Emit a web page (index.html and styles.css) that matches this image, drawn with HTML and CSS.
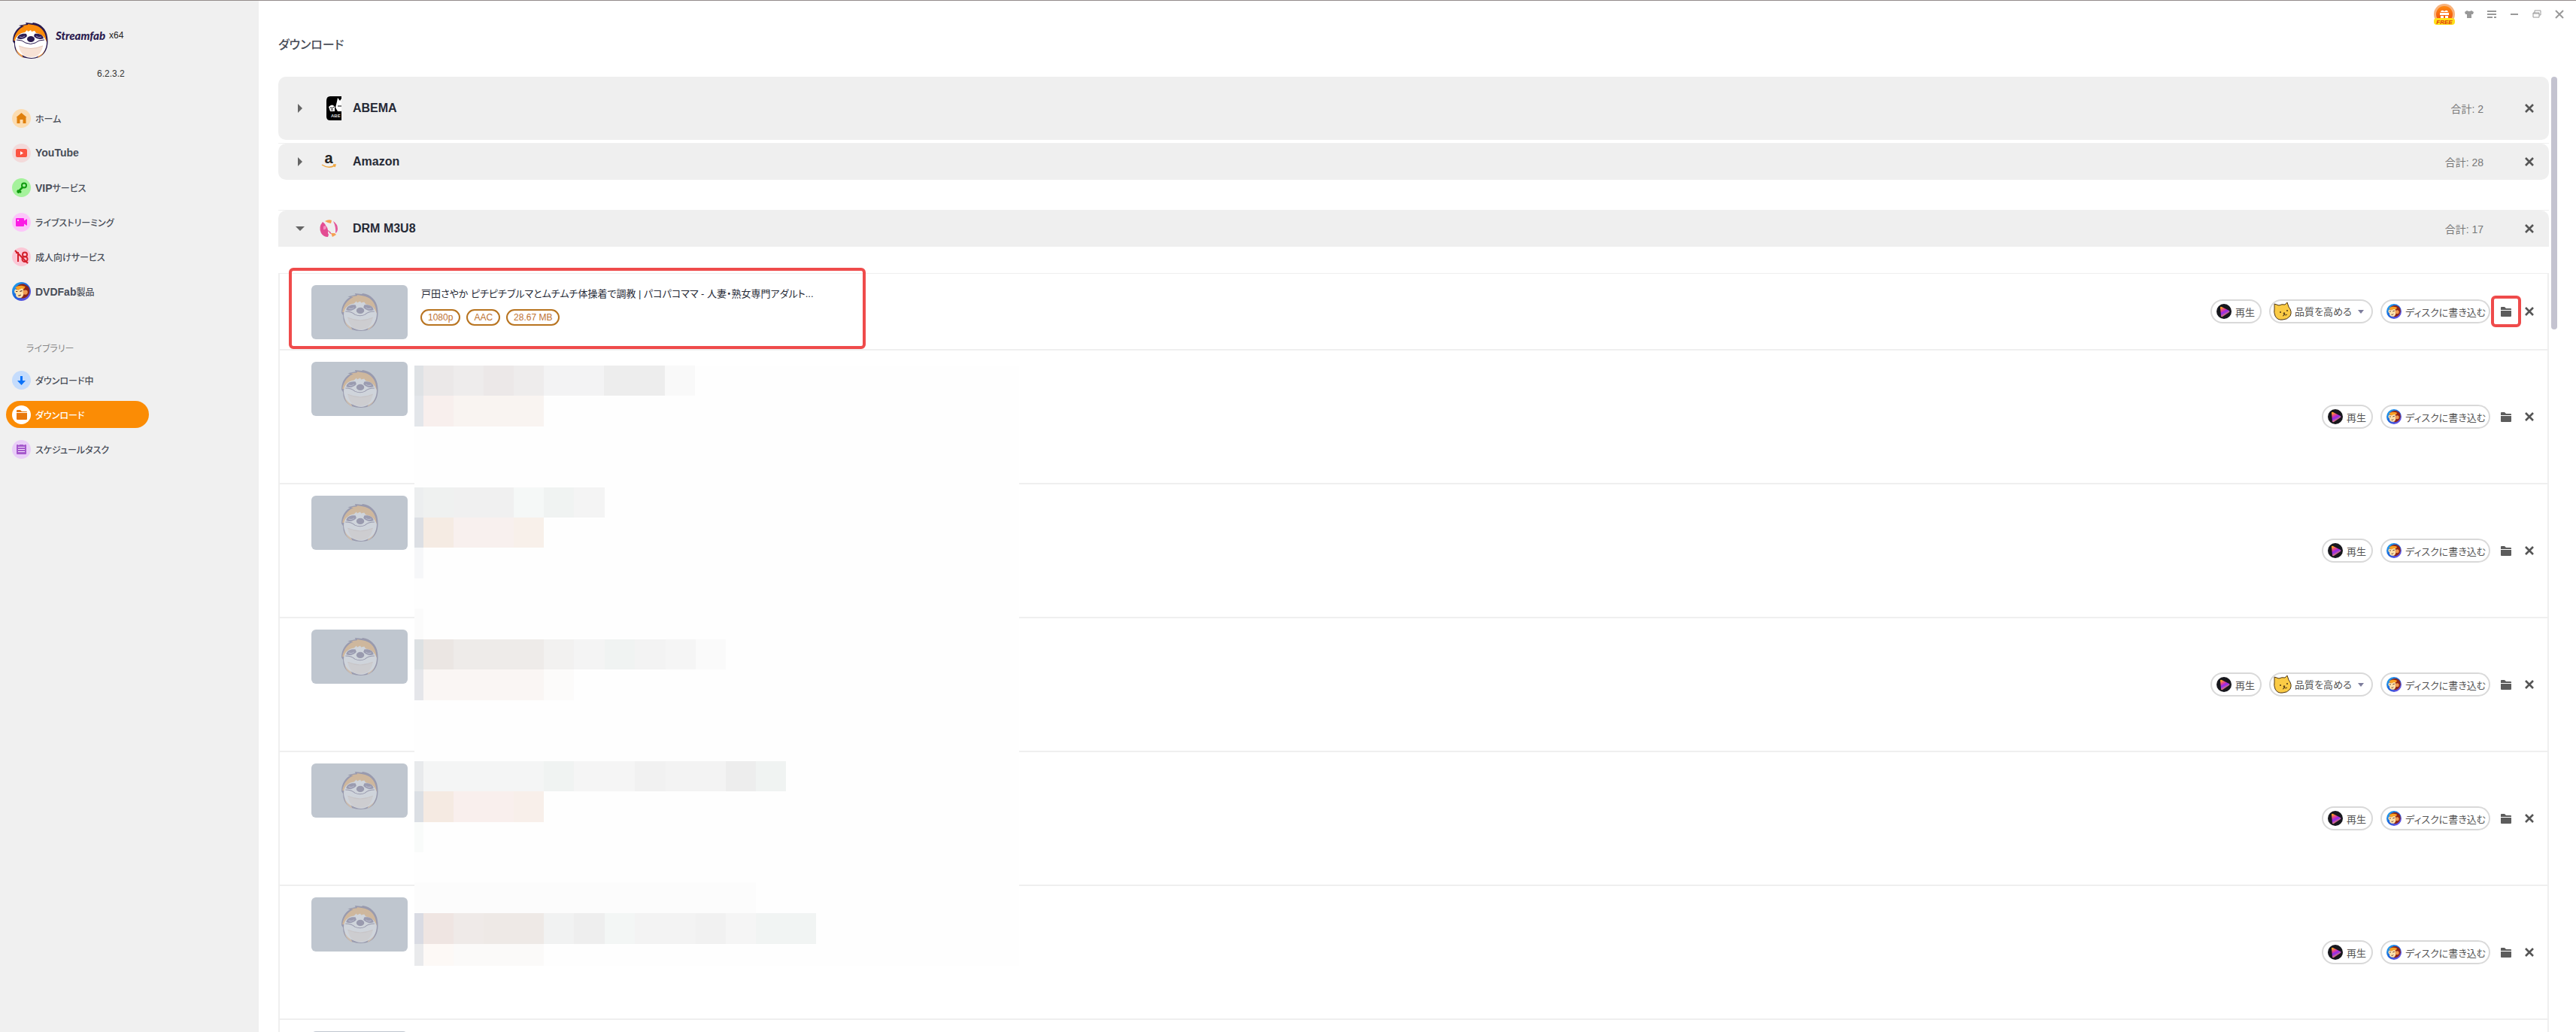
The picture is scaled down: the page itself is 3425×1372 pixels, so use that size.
FILE: index.html
```html
<!DOCTYPE html>
<html lang="ja">
<head>
    <meta charset="UTF-8">
    <title>StreamFab</title>
    <link rel="stylesheet" href="styles.css">
</head>
<body>
<!-- shared icons -->
<svg class="defs" aria-hidden="true">
    <linearGradient id="play-fill" x1="0" y1="0" x2="0.5" y2="1">
        <stop offset="0.1" stop-color="#ffa51f"/>
        <stop offset="0.4" stop-color="#e0399b"/>
        <stop offset="0.6" stop-color="#8f2bf0"/>
        <stop offset="1" stop-color="#ff9a3c"/>
    </linearGradient>
    <linearGradient id="disc-fill" x1="0" y1="0" x2="1" y2="1">
        <stop offset="0" stop-color="#22b4f5"/>
        <stop offset="0.5" stop-color="#1d5fd8"/>
        <stop offset="1" stop-color="#8a4be8"/>
    </linearGradient>
    <linearGradient id="free-fill" x1="0" y1="0" x2="0" y2="1">
        <stop offset="0" stop-color="#ff8a10"/>
        <stop offset="1" stop-color="#f0480c"/>
    </linearGradient>
    <symbol id="sloth" viewBox="0 0 48 48">
        <path d="M3 28l-2-3C1 15 6 8 12 5l-3-1 10-2-1-2 9 1 1-1c10 1 18 9 19 19 2 13-2 23-11 27-8 3-15 2-22 0C6 42 3 36 3 28z" fill="#2a1a4e"/>
        <path d="M2 24C4 14 9 8 16 5l-3-1 8-1v-1l7 1c9 1 16 8 17 17l1 6-42 2 1-4z" fill="#fb8c0c"/>
        <path d="M5 34c1 6 4 10 10 13l-3-7zM44 34c-1 6-4 10-10 13l3-7z" fill="#f0a050"/>
        <path d="M4 25C5 18 10 14 17 13l3-3 1 2 4-2 1 2 4-1 2 3c8 1 12 6 14 12 0 9-4 15-10 18-6 4-14 4-21 0C8 41 3 34 4 25z" fill="#fff"/>
        <path d="M7 21c1-5 6-7 12-6l1 3c-3 4-9 5-13 3zM42 21c-1-5-6-7-12-6l-1 3c3 4 9 5 13 3z" fill="#2f2058"/>
        <path d="M10 19q4 2 7-1M39 19q-4 2-7-1" fill="none" stroke="#a59ac0" stroke-width="1"/>
        <ellipse cx="25" cy="22" rx="5" ry="4" fill="#2a1a4e"/>
        <path d="M6 23q8 0 12 4 7 3 13 0 4-4 12-4" fill="none" stroke="#2a1a4e" stroke-width="1"/>
        <path d="M9 31q16 7 32 0-1 8-7 13-9 4-18 0-6-5-7-13z" fill="#f7e2d5"/>
        <path d="M9 31q16 7 32 0" fill="none" stroke="#e5c5b5" stroke-width="1"/>
    </symbol>
    <symbol id="monkey" viewBox="0 0 24 24">
        <circle cx="12" cy="12" r="12" fill="url(#disc-fill)"/>
        <path d="M5 7c3-5 10-6 13-3 4 1 6 8 3 12-3 5-9 6-12 3z" fill="#8c2418"/>
        <path d="M4 7c4-3 9-3 13-1l-2 3-8 1z" fill="#f8a024"/>
        <path d="M4 9l4 1 5-2c3 3 3 9-1 12-5 1-8-2-7-5-3-2-2-4-1-6z" fill="#fde2ad"/>
        <circle cx="17" cy="13" r="3" fill="#f09a50"/>
        <path d="M5 12l2 0M10 12l3-1M8 17q2 1 3-1" fill="none" stroke="#4a1710" stroke-width="1"/>
    </symbol>
    <symbol id="play" viewBox="0 0 20 20">
        <circle cx="10" cy="10" r="10" fill="#17171d"/>
        <path d="M5 5q0-2 2-1l10 5q1 1 0 2l-9 6q-2 1-2-1z" fill="url(#play-fill)"/>
    </symbol>
    <symbol id="cat" viewBox="0 0 24 24">
        <path d="M1 2l6 2q4-2 8-1l3-3 2 6q5 6 2 12-4 5-10 5-7 1-10-5-2-5-1-9z" fill="#fbcb45" stroke="#4c3517" stroke-width="1"/>
        <circle cx="9" cy="13" r="1" fill="#4c3517"/>
        <circle cx="18" cy="11" r="1" fill="#4c3517"/>
        <path d="M13 14l2 0-1 2zM12 18q2 0 2-2 2 2 4 0" fill="none" stroke="#4c3517"/>
    </symbol>
    <symbol id="folder" viewBox="0 0 14 13">
        <path d="M0 1q0-1 1-1h4l2 2h6q1 0 1 1v1H0zM0 5h14v7q0 1-1 1H1q-1 0-1-1z" fill="#5c5c5c"/>
    </symbol>
    <symbol id="close" viewBox="0 0 12 12">
        <path d="M1 1l10 10M11 1L1 11" stroke="#555" stroke-width="2.6"/>
    </symbol>
</svg>

<div class="app">
    <aside class="sidebar">
        <div class="brand">
            <svg class="logo"><use href="#sloth"/></svg>
            <span class="brand-name">Streamfab</span>
            <span class="brand-arch">x64</span>
        </div>
        <div class="version">6.2.3.2</div>
        <nav>
            <a class="nav-item" href="#">
                <svg class="nav-icon" viewBox="0 0 25 25"><circle cx="12.5" cy="12.5" r="12.5" fill="#fcdcb0"/><path d="M12.500 5l7 6h-1v8h-4v-5h-4v5h-4v-8h-1z" fill="#e0800c"/></svg>
                <span>ホーム</span>
            </a>
            <a class="nav-item" href="#">
                <svg class="nav-icon" viewBox="0 0 25 25"><circle cx="12.5" cy="12.5" r="12.5" fill="#f3dada"/><rect x="5" y="7" width="15" height="11" rx="2" fill="#fc5442"/><path d="M11 10v5l4-2.500z" fill="#fff"/></svg>
                <span><b>YouTube</b></span>
            </a>
            <a class="nav-item" href="#">
                <svg class="nav-icon" viewBox="0 0 25 25"><circle cx="12.5" cy="12.5" r="12.5" fill="#a5f29c"/><circle cx="16" cy="9.5" r="3" fill="none" stroke="#0f9a0f" stroke-width="2"/><path d="M14 12l-7 7M9 16l3 3M7 16l3 3" stroke="#0f9a0f" stroke-width="2.500"/></svg>
                <span><b>VIP</b>サービス</span>
            </a>
            <a class="nav-item" href="#">
                <svg class="nav-icon" viewBox="0 0 25 25"><circle cx="12.5" cy="12.5" r="12.5" fill="#fcc6fa"/><rect x="5" y="7" width="11" height="11" rx="1" fill="#fb1ce4"/><path d="M15 11l5-3v9l-5-3z" fill="#fb1ce4"/><circle cx="8" cy="10" r="1" fill="#fff"/></svg>
                <span>ライブストリーミング</span>
            </a>
            <a class="nav-item" href="#">
                <svg class="nav-icon" viewBox="0 0 25 25"><circle cx="12.5" cy="12.5" r="12.5" fill="#fbc8d6"/><path d="M5 7h3v12M4 4l17 17" fill="none" stroke="#d3202c" stroke-width="2"/><circle cx="17" cy="9.500" r="3" fill="none" stroke="#d3202c" stroke-width="2"/><circle cx="17" cy="15.500" r="3.500" fill="none" stroke="#d3202c" stroke-width="2"/></svg>
                <span>成人向けサービス</span>
            </a>
            <a class="nav-item" href="#">
                <svg class="nav-icon"><use href="#monkey"/></svg>
                <span><b>DVDFab</b>製品</span>
            </a>
        </nav>
        <div class="nav-title">ライブラリー</div>
        <nav>
            <a class="nav-item" href="#">
                <svg class="nav-icon" viewBox="0 0 25 25"><circle cx="12.5" cy="12.5" r="12.5" fill="#c5dcfc"/><path d="M11 7h3v6h4l-5.500 6L7 13h4z" fill="#0a72f8"/></svg>
                <span>ダウンロード中</span>
            </a>
            <a class="nav-item active" href="#">
                <svg class="nav-icon" viewBox="0 0 25 25"><circle cx="12.5" cy="12.5" r="12.5" fill="#fff"/><path d="M6 7q0-1 1-1h4l2 2h6q1 0 1 1H6zM6 10h14v8q0 1-1 1H7q-1 0-1-1z" fill="#e8780c"/></svg>
                <span>ダウンロード</span>
            </a>
            <a class="nav-item" href="#">
                <svg class="nav-icon" viewBox="0 0 25 25"><circle cx="12.5" cy="12.5" r="12.5" fill="#e9cdf8"/><rect x="6" y="6" width="13" height="13" rx="1" fill="#a558cc"/><path d="M9 5v2M16 5v2M8 9.500h9M8 12.500h9M8 15.500h9" stroke="#f2e0fb" stroke-width="1"/></svg>
                <span>スケジュールタスク</span>
            </a>
        </nav>
    </aside>

    <main class="main">
        <div class="titlebar">
            <button class="win-btn free" aria-label="無料">
                <svg width="28" height="28" viewBox="0 0 28 28"><circle cx="14" cy="14" r="14" fill="#f8b27c"/><circle cx="14" cy="14" r="11" fill="url(#free-fill)"/><path d="M8 12h12v3H8zM9 16h4v3H9zM15 16h4v3h-4zM9 11q1-4 5-1 4-3 5 1z" fill="#fff"/><rect x="0" y="19" width="28" height="9" rx="4" fill="#ffe018"/><text class="free-text" x="14" y="27" text-anchor="middle">FREE</text></svg>
            </button>
            <button class="win-btn" aria-label="スキン"><svg width="12" height="12" viewBox="0 0 12 12"><path d="M3 1q3 2 6 0l3 2-1 3H9v5H3V6H1L0 3z" fill="#999"/></svg></button>
            <button class="win-btn" aria-label="メニュー"><svg width="12" height="12" viewBox="0 0 12 12"><path d="M0 2h12M0 6h12M0 10h7M9 10h3" stroke="#999" stroke-width="2"/></svg></button>
            <button class="win-btn" aria-label="最小化"><svg width="12" height="12" viewBox="0 0 12 12"><path d="M1 6h10" stroke="#999" stroke-width="2"/></svg></button>
            <button class="win-btn" aria-label="元に戻す"><svg width="12" height="12" viewBox="0 0 12 12"><path d="M1 4h8v6H1zM3 4V1h8v6H9M1 5h8" fill="none" stroke="#999" stroke-width="1"/></svg></button>
            <button class="win-btn" aria-label="閉じる"><svg width="12" height="12" viewBox="0 0 12 12"><path d="M1 1l10 10M11 1L1 11" stroke="#999" stroke-width="2"/></svg></button>
        </div>
        <h1>ダウンロード</h1>
        <div class="scroll-area">
            <div class="groups">
                <section class="group group-tall">
                    <div class="group-head">
                        <button class="toggle" aria-label="ABEMAを開く"><svg width="12" height="12" viewBox="0 0 12 12"><path d="M3 0v12l6-6z" fill="#666"/></svg></button>
                        <svg class="site-icon" viewBox="0 0 32 32"><path d="M12 6q0-6 5-6h15v32H17q-5 0-5-5z" fill="#000"/><path d="M32 3v17h-5l-3-5 2-8 1-5 3 4zM15 14q5-5 8 0v6h-6z" fill="#fff"/><path d="M17 15l3 1 2-2M18 18h3M27 13h5" stroke="#000" fill="none"/><text class="abema-text" x="18" y="28">ABE</text></svg>
                        <h2>ABEMA</h2>
                        <span class="total">合計: 2</span>
                        <button class="icon-btn" aria-label="削除"><svg width="12" height="12"><use href="#close"/></svg></button>
                    </div>
                </section>
                <section class="group group-amazon">
                    <div class="group-head">
                        <button class="toggle" aria-label="Amazonを開く"><svg width="12" height="12" viewBox="0 0 12 12"><path d="M3 0v12l6-6z" fill="#666"/></svg></button>
                        <svg class="site-icon" viewBox="0 0 32 32"><text class="amazon-text" x="15" y="18" text-anchor="middle">a</text><path d="M6 20q9 6 17 1M21 20l3 0-1 3" fill="none" stroke="#f0a63c" stroke-width="1.500"/></svg>
                        <h2>Amazon</h2>
                        <span class="total">合計: 28</span>
                        <button class="icon-btn" aria-label="削除"><svg width="12" height="12"><use href="#close"/></svg></button>
                    </div>
                </section>
                <section class="group open">
                    <div class="group-head">
                        <button class="toggle" aria-label="DRM M3U8を閉じる"><svg width="12" height="12" viewBox="0 0 12 12"><path d="M0 3h12L6 9z" fill="#666"/></svg></button>
                        <svg class="site-icon" viewBox="0 0 32 32"><path d="M7 7Q1 14 5 22q3 5 9 5l1-3q-2-3 0-5 1 4 4 4-2-4-5-5-1-5-3-6 0-2-4-5z" fill="#e34c92"/><path d="M8 13q3-2 4 1-1 4-4 3z" fill="#f48ec0"/><path d="M21 6q6 4 6 10 0 4-3 6 1-8-3-16z" fill="#e35a9c"/><path d="M10 6q5-3 9-1l-1 4-4-1zM18 22l5 0 2 2-5 3z" fill="#f5a152"/></svg>
                        <h2>DRM M3U8</h2>
                        <span class="total">合計: 17</span>
                        <button class="icon-btn" aria-label="削除"><svg width="12" height="12"><use href="#close"/></svg></button>
                    </div>
                    <div class="items">
                        <article class="item item-first">
                            <div class="thumb"><svg><use href="#sloth"/></svg></div>
                            <div class="info">
                                <h3>戸田さやか ピチピチブルマとムチムチ体操着で調教 | パコパコママ - 人妻・熟女専門アダルト...</h3>
                                <div class="tags"><span>1080p</span><span>AAC</span><span>28.67 MB</span></div>
                            </div>
                            <div class="actions">
                                <button class="pill"><svg><use href="#play"/></svg>再生</button>
                                <label class="pill pill-select"><svg class="cat"><use href="#cat"/></svg><select aria-label="品質"><option>品質を高める</option></select><svg class="caret" viewBox="0 0 8 5"><path d="M0 0h8L4 5z" fill="#7d7d9c"/></svg></label>
                                <button class="pill"><svg><use href="#monkey"/></svg>ディスクに書き込む</button>
                                <button class="folder-btn marked" aria-label="フォルダを開く"><svg width="14" height="13"><use href="#folder"/></svg></button>
                                <button class="icon-btn" aria-label="削除"><svg width="12" height="12"><use href="#close"/></svg></button>
                            </div>
                            <div class="mark"></div>
                        </article>
                        <article class="item">
                            <div class="thumb"><svg><use href="#sloth"/></svg></div>
                            <div class="actions">
                                <button class="pill"><svg><use href="#play"/></svg>再生</button>
                                <button class="pill"><svg><use href="#monkey"/></svg>ディスクに書き込む</button>
                                <button class="folder-btn" aria-label="フォルダを開く"><svg width="14" height="13"><use href="#folder"/></svg></button>
                                <button class="icon-btn" aria-label="削除"><svg width="12" height="12"><use href="#close"/></svg></button>
                            </div>
                        </article>
                        <article class="item">
                            <div class="thumb"><svg><use href="#sloth"/></svg></div>
                            <div class="actions">
                                <button class="pill"><svg><use href="#play"/></svg>再生</button>
                                <button class="pill"><svg><use href="#monkey"/></svg>ディスクに書き込む</button>
                                <button class="folder-btn" aria-label="フォルダを開く"><svg width="14" height="13"><use href="#folder"/></svg></button>
                                <button class="icon-btn" aria-label="削除"><svg width="12" height="12"><use href="#close"/></svg></button>
                            </div>
                        </article>
                        <article class="item">
                            <div class="thumb"><svg><use href="#sloth"/></svg></div>
                            <div class="actions">
                                <button class="pill"><svg><use href="#play"/></svg>再生</button>
                                <label class="pill pill-select"><svg class="cat"><use href="#cat"/></svg><select aria-label="品質"><option>品質を高める</option></select><svg class="caret" viewBox="0 0 8 5"><path d="M0 0h8L4 5z" fill="#7d7d9c"/></svg></label>
                                <button class="pill"><svg><use href="#monkey"/></svg>ディスクに書き込む</button>
                                <button class="folder-btn" aria-label="フォルダを開く"><svg width="14" height="13"><use href="#folder"/></svg></button>
                                <button class="icon-btn" aria-label="削除"><svg width="12" height="12"><use href="#close"/></svg></button>
                            </div>
                        </article>
                        <article class="item">
                            <div class="thumb"><svg><use href="#sloth"/></svg></div>
                            <div class="actions">
                                <button class="pill"><svg><use href="#play"/></svg>再生</button>
                                <button class="pill"><svg><use href="#monkey"/></svg>ディスクに書き込む</button>
                                <button class="folder-btn" aria-label="フォルダを開く"><svg width="14" height="13"><use href="#folder"/></svg></button>
                                <button class="icon-btn" aria-label="削除"><svg width="12" height="12"><use href="#close"/></svg></button>
                            </div>
                        </article>
                        <article class="item">
                            <div class="thumb"><svg><use href="#sloth"/></svg></div>
                            <div class="actions">
                                <button class="pill"><svg><use href="#play"/></svg>再生</button>
                                <button class="pill"><svg><use href="#monkey"/></svg>ディスクに書き込む</button>
                                <button class="folder-btn" aria-label="フォルダを開く"><svg width="14" height="13"><use href="#folder"/></svg></button>
                                <button class="icon-btn" aria-label="削除"><svg width="12" height="12"><use href="#close"/></svg></button>
                            </div>
                        </article>
                        <article class="item">
                            <div class="thumb"><svg><use href="#sloth"/></svg></div>
                        </article>
                        <!-- pixelated cover over the titles -->
                        <svg class="mosaic" viewBox="0 0 804 798">
                            <rect width="804" height="798" fill="#fefefe"/>
                            <!-- item 2 -->
                            <rect x="0" y="0" width="12" height="40" fill="#dfe2e5"/>
                            <rect x="12" y="0" width="40" height="40" fill="#ebe8e8"/>
                            <rect x="52" y="0" width="40" height="40" fill="#eeecec"/>
                            <rect x="92" y="0" width="40" height="40" fill="#ece8e8"/>
                            <rect x="132" y="0" width="40" height="40" fill="#eeecec"/>
                            <rect x="172" y="0" width="80" height="40" fill="#f3f3f4"/>
                            <rect x="252" y="0" width="81" height="40" fill="#ededed"/>
                            <rect x="333" y="0" width="40" height="40" fill="#f9f9f9"/>
                            <rect x="0" y="40" width="12" height="41" fill="#e3e6ea"/>
                            <rect x="12" y="40" width="40" height="41" fill="#f8efed"/>
                            <rect x="52" y="40" width="120" height="41" fill="#f9f4f1"/>
                            <!-- item 3 -->
                            <rect x="0" y="162" width="12" height="40" fill="#eceeef"/>
                            <rect x="12" y="162" width="40" height="40" fill="#eff1f0"/>
                            <rect x="52" y="162" width="80" height="40" fill="#f0f0f0"/>
                            <rect x="132" y="162" width="40" height="40" fill="#f5f8f7"/>
                            <rect x="172" y="162" width="40" height="40" fill="#f0f3f2"/>
                            <rect x="212" y="162" width="41" height="40" fill="#f4f4f4"/>
                            <rect x="0" y="202" width="12" height="40" fill="#dcdfe4"/>
                            <rect x="12" y="202" width="40" height="40" fill="#f5ebe3"/>
                            <rect x="52" y="202" width="80" height="40" fill="#f8f0ee"/>
                            <rect x="132" y="202" width="40" height="40" fill="#f8f0ea"/>
                            <rect x="0" y="242" width="12" height="41" fill="#f6f7f9"/>
                            <!-- item 4 -->
                            <rect x="0" y="323" width="12" height="41" fill="#fbfbfb"/>
                            <rect x="0" y="364" width="12" height="40" fill="#dde1e3"/>
                            <rect x="12" y="364" width="40" height="40" fill="#ebe6e3"/>
                            <rect x="52" y="364" width="120" height="40" fill="#eeebe9"/>
                            <rect x="172" y="364" width="40" height="40" fill="#f2f1f0"/>
                            <rect x="212" y="364" width="41" height="40" fill="#f4f4f4"/>
                            <rect x="253" y="364" width="40" height="40" fill="#f0f3f2"/>
                            <rect x="293" y="364" width="41" height="40" fill="#f3f3f3"/>
                            <rect x="334" y="364" width="40" height="40" fill="#f5f5f5"/>
                            <rect x="374" y="364" width="40" height="40" fill="#fafafa"/>
                            <rect x="0" y="404" width="12" height="41" fill="#e5e6ea"/>
                            <rect x="12" y="404" width="160" height="41" fill="#faf6f4"/>
                            <rect x="172" y="404" width="40" height="41" fill="#fcfbfa"/>
                            <!-- item 5 -->
                            <rect x="0" y="526" width="12" height="40" fill="#e8eaec"/>
                            <rect x="12" y="526" width="160" height="40" fill="#f4f5f5"/>
                            <rect x="172" y="526" width="40" height="40" fill="#f0f3f2"/>
                            <rect x="212" y="526" width="81" height="40" fill="#f5f5f5"/>
                            <rect x="293" y="526" width="41" height="40" fill="#f1f1f1"/>
                            <rect x="334" y="526" width="80" height="40" fill="#f3f3f3"/>
                            <rect x="414" y="526" width="40" height="40" fill="#ededed"/>
                            <rect x="454" y="526" width="40" height="40" fill="#f0f3f2"/>
                            <rect x="0" y="566" width="12" height="41" fill="#dbdfe4"/>
                            <rect x="12" y="566" width="40" height="41" fill="#f5eae2"/>
                            <rect x="52" y="566" width="80" height="41" fill="#f9efed"/>
                            <rect x="132" y="566" width="40" height="41" fill="#f8efea"/>
                            <rect x="0" y="607" width="12" height="40" fill="#f9fbfa"/>
                            <!-- item 6 -->
                            <rect x="0" y="687" width="454" height="41" fill="#fcfcfc"/>
                            <rect x="0" y="728" width="12" height="41" fill="#d9dbe3"/>
                            <rect x="12" y="728" width="40" height="41" fill="#efe5e2"/>
                            <rect x="52" y="728" width="40" height="41" fill="#efeae8"/>
                            <rect x="92" y="728" width="80" height="41" fill="#eee9e6"/>
                            <rect x="172" y="728" width="40" height="41" fill="#f1f2f2"/>
                            <rect x="212" y="728" width="41" height="41" fill="#eeeeee"/>
                            <rect x="253" y="728" width="40" height="41" fill="#f3f6f5"/>
                            <rect x="293" y="728" width="81" height="41" fill="#f3f3f3"/>
                            <rect x="374" y="728" width="40" height="41" fill="#f1f1f1"/>
                            <rect x="414" y="728" width="40" height="41" fill="#f5f5f5"/>
                            <rect x="454" y="728" width="80" height="41" fill="#f1f4f3"/>
                            <rect x="0" y="769" width="12" height="29" fill="#e9eaec"/>
                            <rect x="12" y="769" width="40" height="29" fill="#fdf9f6"/>
                            <rect x="52" y="769" width="120" height="29" fill="#fbfaf9"/>
                        </svg>
                    </div>
                </section>
            </div>
            <div class="scrollbar"></div>
        </div>
    </main>
</div>
</body>
</html>
```
FILE: styles.css
```css
*{
    box-sizing: border-box;
}
body{
    margin: 0;
    background-color: white;
    color: #484d58;
    font-family: "Liberation Sans", "Noto Sans CJK JP", sans-serif;
    font-size: 13px;
    font-feature-settings: "palt";
}
button,select{
    margin: 0;
    padding: 0;
    border: 0;
    background: none;
    color: inherit;
    font: inherit;
    font-feature-settings: inherit;
}
svg{
    display: block;
    flex-shrink: 0;
}
.defs{
    position: absolute;
    width: 0;
    height: 0;
}
.app{
    display: flex;
    height: 100vh;
    overflow: hidden;
    border-top: 1px solid #938b8a;
}

/* sidebar */
.sidebar{
    width: 344px;
    flex-shrink: 0;
    padding-top: 29px;
    background-color: #f0f0f0;
}
.brand{
    display: flex;
    align-items: flex-start;
    height: 50px;
    padding-left: 16px;
    line-height: 34px;
    color: #222;
}
.logo{
    width: 48px;
    height: 48px;
    margin-right: 10px;
}
.brand-name{
    margin-right: 5px;
    font-family: Lato, sans-serif;
    font-size: 15px;
    font-weight: 900;
    font-style: italic;
    color: #2a1a4e;
}
.brand-arch{
    font-size: 12px;
}
.version{
    padding: 8px 0 31px 129px;
    line-height: 20px;
    font-size: 12px;
    color: #333;
}
.nav-item{
    display: flex;
    align-items: center;
    gap: 6px;
    width: 190px;
    height: 36px;
    margin: 0 0 10px 8px;
    padding-left: 8px;
    border-radius: 18px;
    color: #484d58;
    text-decoration: none;
    font-size: 12px;
    font-weight: 500;
}
.nav-item b{
    font-size: 14px;
}
.nav-item.active{
    background-color: #fb8c05;
    color: white;
}
.nav-icon{
    width: 25px;
    height: 25px;
}
.nav-title{
    padding: 39px 0 13px 35px;
    line-height: 20px;
    font-size: 12px;
    color: #888;
}

/* main */
.main{
    display: flex;
    flex: 1;
    flex-direction: column;
    min-width: 0;
    padding: 0 25px 0 26px;
}
.titlebar{
    display: flex;
    justify-content: flex-end;
    align-items: center;
    height: 36px;
    margin-right: -18px;
}
.win-btn{
    display: flex;
    justify-content: center;
    width: 30px;
}
.win-btn.free{
    width: 36px;
}
.free-text{
    font-size: 8px;
    font-weight: bold;
    font-style: italic;
    fill: #e03a10;
}
h1{
    height: 46px;
    margin: 0 0 19px;
    line-height: 46px;
    font-size: 16px;
    font-weight: 500;
}
.scroll-area{
    display: flex;
    flex: 1;
    gap: 3px;
    min-height: 0;
}
.groups{
    flex: 1;
    min-width: 0;
}
.scrollbar{
    width: 8px;
    height: 336px;
    border-radius: 4px;
    background-color: #c4c3d0;
}
.group{
    border-top: 1px solid #f0f0f0;
}
.group-head{
    display: flex;
    align-items: center;
    height: 48px;
    padding: 0 16px 0 17px;
    border-radius: 10px;
    background-color: #efefef;
}
.group-tall{
    margin-bottom: 4px;
    border-top: 0;
}
.group-tall .group-head{
    height: 84px;
}
.group-amazon{
    margin-bottom: 40px;
}
.open .group-head{
    border-radius: 10px 10px 0 0;
}
.toggle{
    display: flex;
    justify-content: center;
    width: 24px;
    margin-right: 11px;
}
.site-icon{
    width: 32px;
    height: 32px;
    margin-right: 15px;
}
.amazon-text{
    font-size: 20px;
    font-weight: bold;
    fill: #222;
}
.abema-text{
    font-size: 6px;
    font-weight: bold;
    fill: #ddd;
}
h2{
    flex: 1;
    margin: 0;
    font-size: 16px;
    color: #262a36;
}
.total{
    margin-right: 51px;
    font-size: 14px;
    color: #777;
}
.icon-btn{
    display: flex;
    justify-content: center;
    width: 20px;
}

/* download items */
.items{
    position: relative;
    margin-top: 35px;
    border: 2px solid #efefef;
    border-width: 1px 2px 0;
}
.item{
    display: flex;
    position: relative;
    align-items: center;
    height: 178px;
    padding: 0 14px 0 42px;
    border-bottom: 2px solid #efefef;
}
.item-first{
    height: 102px;
}
.thumb{
    display: flex;
    align-items: center;
    align-self: flex-start;
    justify-content: center;
    width: 128px;
    height: 72px;
    margin-top: 15px;
    border-radius: 6px;
    background-color: #bfc6cf;
}
.thumb svg{
    width: 50px;
    height: 50px;
    opacity: 0.25;
}
.info{
    align-self: flex-start;
    margin: 17px 0 0 17px;
}
h3{
    margin: 0 0 10px 1px;
    line-height: 20px;
    font-size: 13px;
    font-weight: normal;
    color: #262a36;
}
.tags{
    display: flex;
    gap: 8px;
}
.tags span{
    height: 22px;
    padding: 0 8px;
    border: 2px solid #b87420;
    border-radius: 11px;
    line-height: 18px;
    font-size: 12px;
    color: #bd7232;
}
.actions{
    display: flex;
    align-items: center;
    margin-left: auto;
}
.pill{
    display: flex;
    align-items: center;
    gap: 5px;
    min-width: 68px;
    height: 32px;
    margin-right: 10px;
    padding: 0 4px 0 6px;
    border: 2px solid #d9d9d9;
    border-radius: 16px;
    color: #555;
}
.pill svg{
    width: 20px;
    height: 20px;
}
.pill .cat{
    width: 24px;
    height: 24px;
}
.pill-select{
    gap: 4px;
    padding: 0 10px 0 4px;
}
.pill select{
    appearance: none;
    width: 80px;
}
.pill .caret{
    width: 8px;
    height: 5px;
}
.folder-btn{
    display: flex;
    align-items: center;
    justify-content: center;
    width: 40px;
    height: 42px;
    margin: 0 1px 0 -9px;
    border: 4px solid transparent;
    border-radius: 6px;
}
.folder-btn.marked{
    border-color: #ef4b4b;
}
.mark{
    position: absolute;
    top: -8px;
    left: 12px;
    width: 767px;
    height: 108px;
    border: 4px solid #ef4b4b;
    border-radius: 6px;
}
.mosaic{
    position: absolute;
    top: 122px;
    left: 179px;
    width: 804px;
    height: 798px;
}
```
